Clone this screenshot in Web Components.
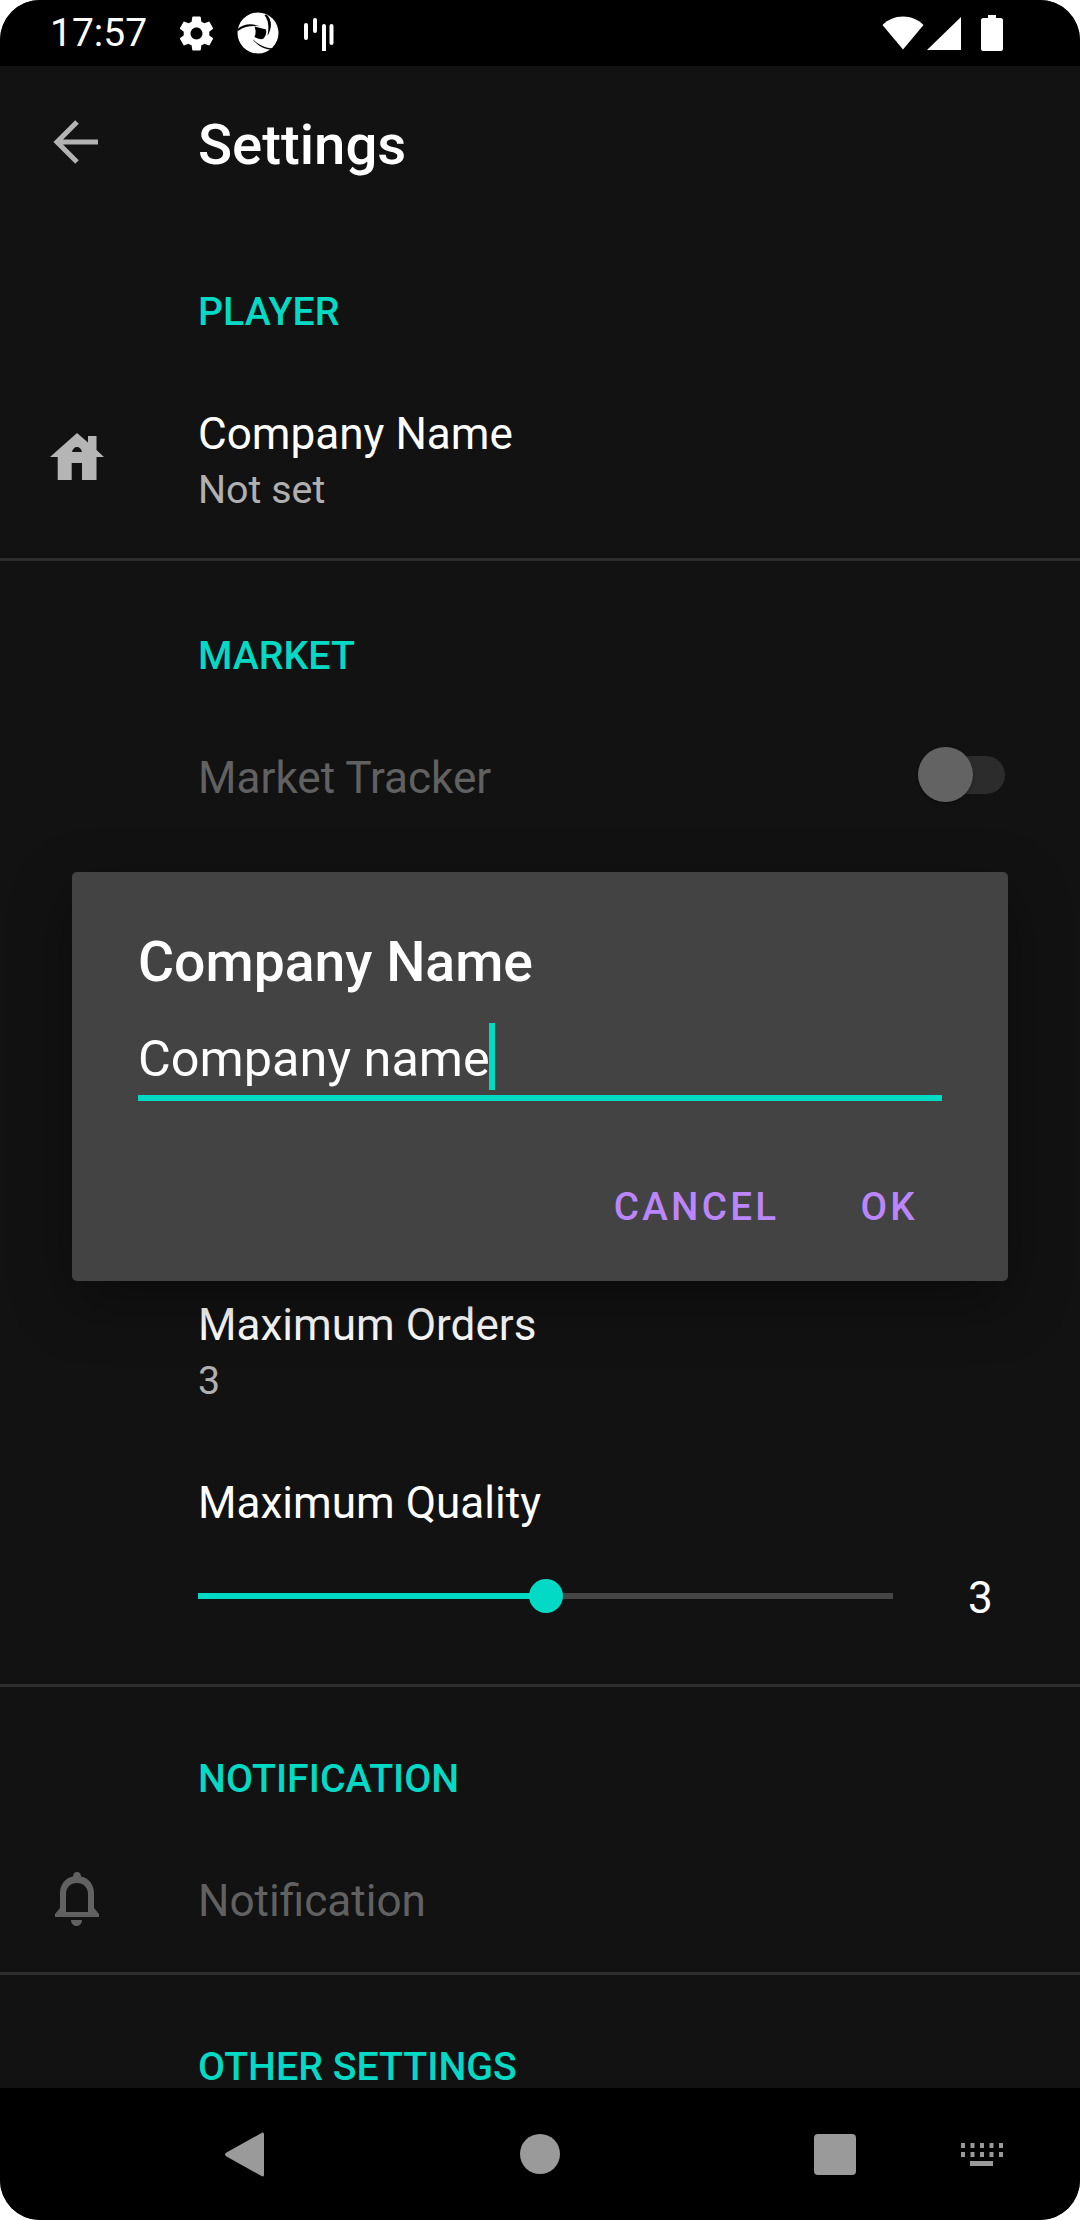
<!DOCTYPE html>
<html><head><meta charset="utf-8">
<style>
html,body{margin:0;padding:0;background:#fff;}
body{width:1080px;height:2220px;overflow:hidden;font-family:Roboto,"Liberation Sans",sans-serif;}
</style></head><body>
<phone-screen>
  <status-bar slot="top"></status-bar>
  <app-bar slot="top" title="Settings"></app-bar>
  <settings-list>
    <section-header style="--pt:50px">PLAYER</section-header>
    <pref-row icon="home" title="Company Name" summary="Not set" style="--row-h:210px;--row-pt:16px;--ic-top:85px;--ic-left:50px"></pref-row>
    <list-divider></list-divider>
    <section-header style="--pt:57px">MARKET</section-header>
    <pref-row title="Market Tracker" disabled toggle style="--row-h:170px;--row-pt:1px"></pref-row>
    <hidden-gap style="--h:437px"></hidden-gap>
    <pref-row title="Maximum Orders" summary="3" style="--row-h:106px"></pref-row>
    <slider-row title="Maximum Quality" value="3"></slider-row>
    <list-divider></list-divider>
    <section-header style="--pt:54px">NOTIFICATION</section-header>
    <pref-row icon="bell" title="Notification" disabled style="--row-h:157px;--row-pt:14px;--ic-top:57px;--ic-left:55px"></pref-row>
    <list-divider></list-divider>
    <section-header style="--pt:54px">OTHER SETTINGS</section-header>
  </settings-list>
  <nav-bar slot="bottom"></nav-bar>
  <name-dialog slot="overlay" heading="Company Name" value="Company name"></name-dialog>
</phone-screen>
<script>
function define(name, css, html){
  customElements.define(name, class extends HTMLElement{
    connectedCallback(){
      if(this.shadowRoot) return;
      const r=this.attachShadow({mode:'open'});
      const h=typeof html==='function'?html(this):html;
      r.innerHTML='<style>'+css+'</style>'+h;
    }
  });
}
const esc=s=>String(s||'');
define('phone-screen',`
:host{display:block;position:relative;width:1080px;height:2220px;border-radius:40px;overflow:hidden;background:#121212;color:#fff;font-family:Roboto,"Liberation Sans",sans-serif;}
.col{display:flex;flex-direction:column;height:100%;}
.mid{flex:1;min-height:0;overflow:hidden;}
`,`<div class="col"><slot name="top"></slot><div class="mid"><slot></slot></div><slot name="bottom"></slot></div><slot name="overlay"></slot>`);

define('status-bar',`
:host{display:flex;align-items:center;height:66px;background:#000;color:#fff;flex:none;padding:0 77px 0 50px;box-sizing:border-box;}
.t{font-size:39px;line-height:66px;width:126px;flex:none;}
svg{display:block;flex:none;}
.sp{flex:1;}
`,`<span class="t">17:57</span>
<svg width="41" height="41" viewBox="0 0 24 24"><path fill="#fff" d="M19.43 12.98c.04-.32.07-.64.07-.98s-.03-.66-.07-.98l2.11-1.65c.19-.15.24-.42.12-.64l-2-3.46c-.12-.22-.39-.3-.61-.22l-2.49 1c-.52-.4-1.08-.73-1.69-.98l-.38-2.65C14.46 2.18 14.25 2 14 2h-4c-.25 0-.46.18-.49.42l-.38 2.65c-.61.25-1.17.59-1.69.98l-2.49-1c-.23-.09-.49 0-.61.22l-2 3.46c-.13.22-.07.49.12.64l2.11 1.65c-.04.32-.07.65-.07.98s.03.66.07.98l-2.11 1.65c-.19.15-.24.42-.12.64l2 3.46c.12.22.39.3.61.22l2.49-1c.52.4 1.08.73 1.69.98l.38 2.65c.03.24.24.42.49.42h4c.25 0 .46-.18.49-.42l.38-2.65c.61-.25 1.17-.59 1.69-.98l2.49 1c.23.09.49 0 .61-.22l2-3.46c.12-.22.07-.49-.12-.64l-2.11-1.65zM12 15.5c-1.93 0-3.5-1.57-3.5-3.5s1.57-3.5 3.5-3.5 3.5 1.57 3.5 3.5-1.57 3.5-3.5 3.5z"/></svg>
<svg width="42" height="42" viewBox="0 0 42 42" style="margin-left:20px"><circle cx="21" cy="21" r="20.500" fill="#fff"/><path fill="#000" d="M17.500 14.500 29 17.500c1 3.500-.5 7-3 9.500-3 .5-6-.5-8.500-2 1.500-3.500 1.500-7 0-10.500z"/><path fill="#000" d="M0 17.500C7 11.500 15 11 23 14.500 15.500 13.500 8 14 1 19zM29.500 2.500C35 8 35.500 15 30.500 24 32 16 32 9 27.500 3zM15.500 27c5 5 12 9 21 9.500l-1.500 1.500C27 37 20 33.500 15.500 27z"/></svg>
<svg width="32" height="36" viewBox="0 0 32 36" style="margin-left:24px"><g stroke="#fff" stroke-width="4" stroke-linecap="round" fill="none"><path d="M3 10v13M12 5v11M21 11v24M28.500 11v17"/></g></svg>
<span class="sp"></span>
<svg width="42" height="36" viewBox="0 0 42 36"><path fill="#fff" d="M21 34.500 .5 10C6 4.500 13 1.500 21 1.500S36 4.500 41.500 10z"/></svg>
<svg width="36" height="36" viewBox="0 0 36 36" style="margin-left:2px"><path fill="#fff" d="M35 2v33H1z"/></svg>
<svg width="22" height="36" viewBox="0 0 22 36" style="margin-left:19px"><path fill="#fff" d="M7 0h8v3h5c1 0 2 1 2 2v29c0 1-1 2-2 2H2c-1 0-2-1-2-2V5c0-1 1-2 2-2h5z"/></svg>`);

define('app-bar',`
:host{display:flex;align-items:center;height:158px;flex:none;box-sizing:border-box;padding:0 0 0 198px;position:relative;}
svg{position:absolute;left:52px;top:53px;}
.t{font-size:56.3px;font-weight:500;line-height:160px;color:#fff;}
`,h=>`<svg width="46" height="46" viewBox="0 0 46 46"><path fill="none" stroke="#b3b3b3" stroke-width="5" d="M46 23H5M25 3 5 23l20 20"/></svg><span class="t">${esc(h.getAttribute('title'))}</span>`);

define('settings-list',`:host{display:flex;flex-direction:column;}`,`<slot></slot>`);

define('section-header',`
:host{display:block;box-sizing:border-box;padding:calc(var(--pt,50px) + 1px) 0 0 198px;color:#03dac5;font-size:39.3px;font-weight:500;line-height:74px;height:calc(var(--pt,50px) + 74px);white-space:nowrap;flex:none;}
`,`<slot></slot>`);

const ICONS={
home:`<svg width="54" height="47" viewBox="0 0 54 47" style="display:block"><path fill="#b5b5b5" fill-rule="evenodd" d="M27 0 38 9.500V3h8.500v14l7.500 7h-7.500v23H32V30H21.700v17H7.700V24H0zM22 19c.5-3 2.500-5 5-5s4.500 2 5 5z"/></svg>`,
bell:`<svg width="44" height="54" viewBox="0 0 44 54" style="display:block"><path fill="#616161" fill-rule="evenodd" d="M22 0c2.500 0 4 1.800 4 4.500C34 6 39 13 39 21v15l5 6v3H0v-3l5-6V21C5 13 10 6 18 4.500 18 1.800 19.500 0 22 0zM11 40h22V22c0-6.500-4.500-11-11-11s-11 4.500-11 11zM16 48h11c0 3.500-2.500 6-5.500 6S16 51.500 16 48z"/></svg>`};

define('pref-row',`
:host{display:flex;align-items:center;box-sizing:border-box;height:var(--row-h,122px);padding:var(--row-pt,0) 0 0 198px;position:relative;flex:none;}
.ic{position:absolute;left:var(--ic-left,50px);top:var(--ic-top,0);}
.txt{display:flex;flex-direction:column;}
.a{font-size:44.1px;line-height:50px;padding-top:1px;color:#fff;white-space:nowrap;}
.b{font-size:39.4px;line-height:50px;margin-top:6px;color:#b0b0b0;white-space:nowrap;}
:host([disabled]) .a{color:#616161;}
.sw{position:absolute;left:918px;top:55px;width:87px;height:55px;}
.tr{position:absolute;left:0;top:9px;width:87px;height:38px;border-radius:19px;background:#2c2c2c;}
.th{position:absolute;left:0;top:0;width:55px;height:55px;border-radius:50%;background:#636363;box-shadow:0 1px 3px rgba(0,0,0,.4);}
`,h=>{
 const ic=h.getAttribute('icon');
 return `${ic?`<span class="ic">${ICONS[ic]}</span>`:''}<div class="txt"><span class="a">${esc(h.getAttribute('title'))}</span>${h.hasAttribute('summary')?`<span class="b">${esc(h.getAttribute('summary'))}</span>`:''}</div>${h.hasAttribute('toggle')?`<span class="sw"><span class="tr"></span><span class="th"></span></span>`:''}`;
});

define('hidden-gap',`:host{display:block;height:var(--h);flex:none;}`,``);

define('list-divider',`:host{display:block;height:3px;background:#2e2e2e;flex:none;}`,``);

define('slider-row',`
:host{display:block;height:279px;flex:none;box-sizing:border-box;padding:73px 0 0 198px;position:relative;}
.a{font-size:44.1px;line-height:50px;color:#fff;display:block;white-space:nowrap;}
.r{display:flex;align-items:center;margin-top:48px;height:40px;}
.tk{position:relative;width:695px;height:6px;background:#464646;flex:none;}
.fl{position:absolute;left:0;top:0;height:6px;width:347px;background:#03dac5;}
.th{position:absolute;left:331px;top:-14px;width:34px;height:34px;border-radius:50%;background:#03dac5;}
.v{font-size:44.1px;margin-left:75px;color:#fff;line-height:40px;padding-top:3px;}
`,h=>`<span class="a">${esc(h.getAttribute('title'))}</span><div class="r"><div class="tk"><div class="fl"></div><div class="th"></div></div><span class="v">${esc(h.getAttribute('value'))}</span></div>`);

define('nav-bar',`
:host{display:block;height:132px;background:#000;flex:none;position:relative;}
svg{position:absolute;}
`,`<svg style="left:225px;top:44px" width="39" height="45" viewBox="0 0 39 45"><path fill="#9a9a9a" d="M36.500 1C38 0 39 .8 39 2.500v40c0 1.700-1 2.500-2.500 1.500L1.500 24.500c-2-1.200-2-2.800 0-4z"/></svg>
<svg style="left:520px;top:46px" width="40" height="40"><circle cx="20" cy="20" r="20" fill="#9a9a9a"/></svg>
<svg style="left:814px;top:46px" width="42" height="41"><rect width="42" height="41" rx="4" fill="#9a9a9a"/></svg>
<svg style="left:961px;top:55px" width="42" height="23" viewBox="0 0 42 23"><g fill="#9a9a9a"><path d="M0 0h4v5H0zM9.500 0h4v5h-4zM19 0h4v5h-4zM28.500 0h4v5h-4zM38 0h4v5h-4zM0 9h4v5H0zM9.500 9h4v5h-4zM19 9h4v5h-4zM28.500 9h4v5h-4zM38 9h4v5h-4zM9 18h23v5H9z"/></g></svg>`);

define('name-dialog',`
:host{position:absolute;left:72px;top:872px;width:936px;height:409px;box-sizing:border-box;padding:0 66px;background:#434343;border-radius:5px;box-shadow:0 20px 60px rgba(0,0,0,.35);display:flex;flex-direction:column;color:#fff;}
h2{margin:61px 0 0;font-size:55.3px;font-weight:500;line-height:60px;white-space:nowrap;}
.f{display:flex;align-items:flex-start;margin-top:30px;height:67px;}
.i{font-size:50.4px;line-height:72px;white-space:nowrap;}
.c{display:block;width:6px;height:67px;background:#03dac5;flex:none;margin-left:-1px;}
.u{height:6px;background:#03dac5;margin-top:5px;}
.act{display:flex;justify-content:flex-end;align-items:center;margin-top:83px;gap:81px;margin-right:24px;}
.b{font-size:38.6px;font-weight:500;letter-spacing:3.3px;color:#bb86fc;line-height:46px;}
`,h=>`<h2>${esc(h.getAttribute('heading'))}</h2><div class="f"><span class="i">${esc(h.getAttribute('value'))}</span><span class="c"></span></div><div class="u"></div><div class="act"><span class="b">CANCEL</span><span class="b">OK</span></div>`);
</script>
</body></html>
